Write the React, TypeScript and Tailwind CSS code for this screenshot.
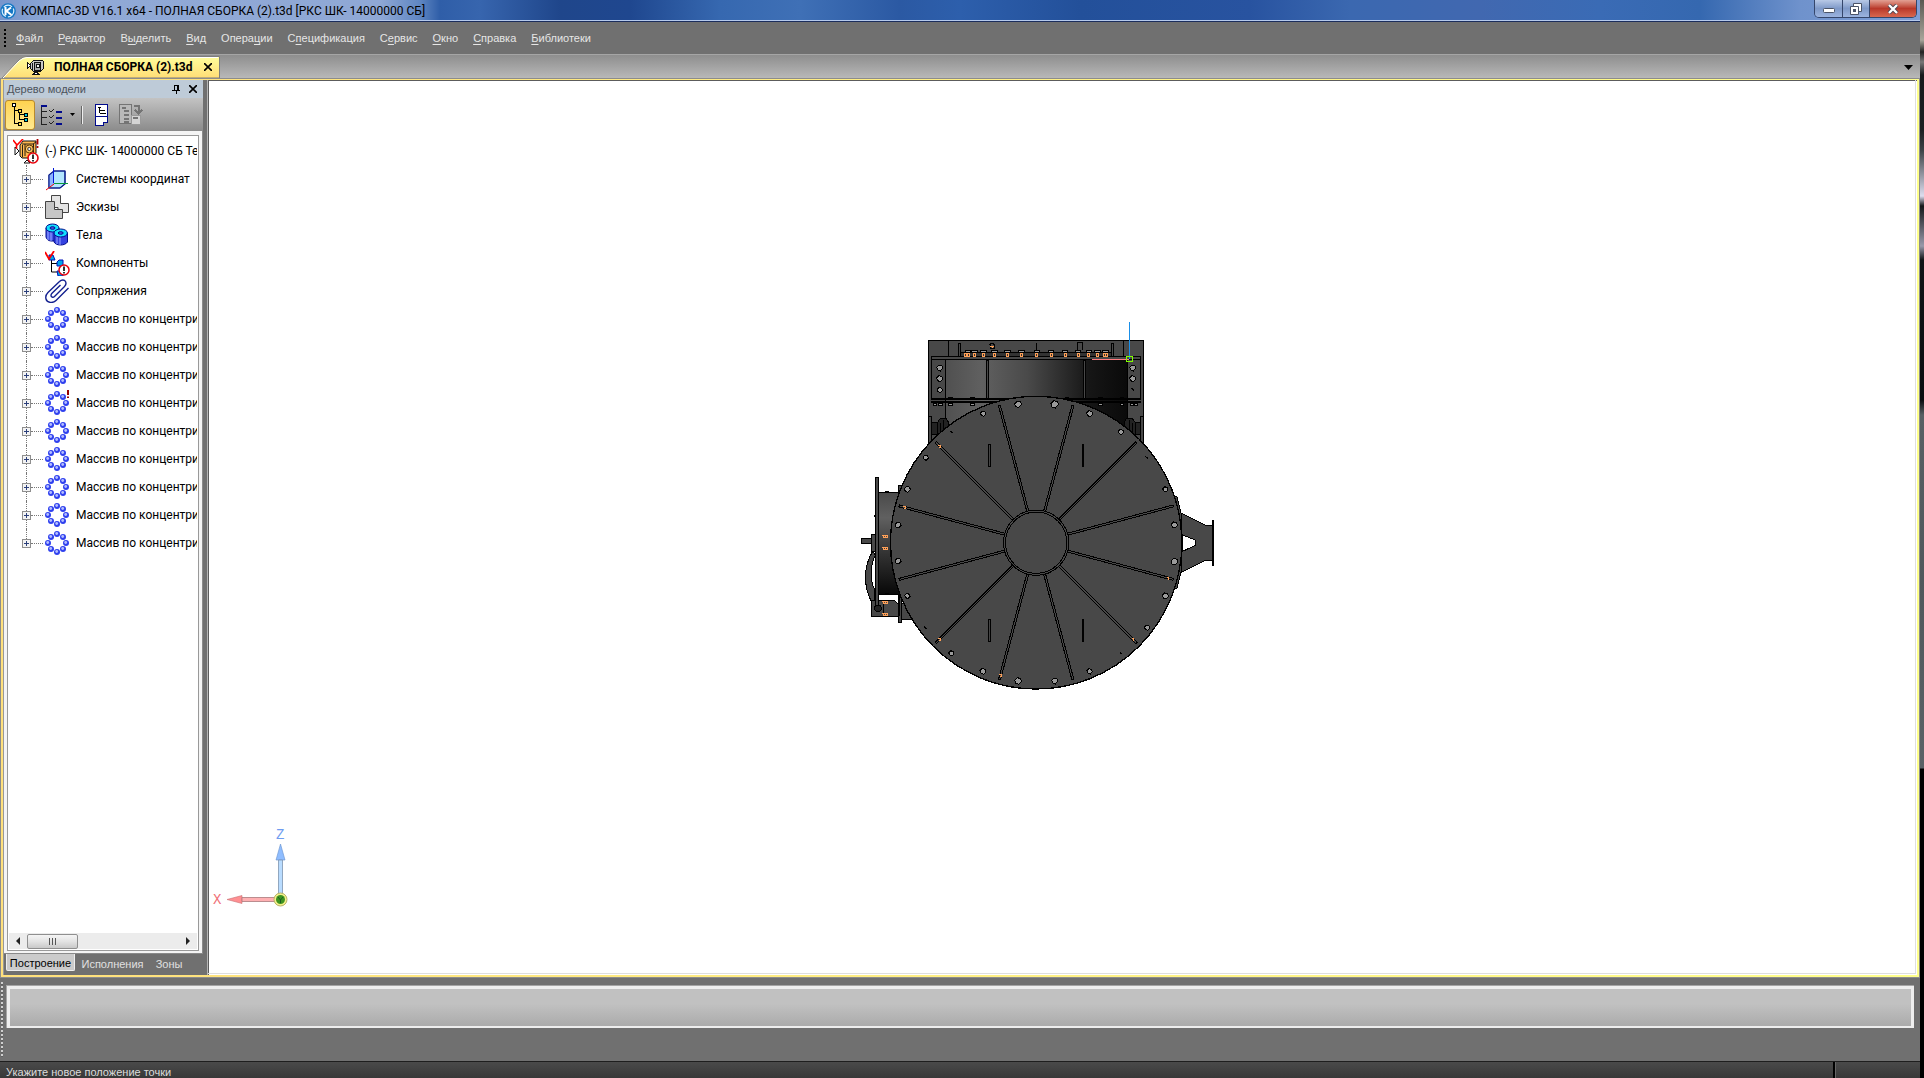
import type { ReactNode } from "react";

const menu = [
  ["", "Ф", "айл"],
  ["", "Р", "едактор"],
  ["В", "ы", "делить"],
  ["", "В", "ид"],
  ["Опера", "ц", "ии"],
  ["С", "п", "ецификация"],
  ["С", "е", "рвис"],
  ["", "О", "кно"],
  ["", "С", "правка"],
  ["", "Б", "иблиотеки"],
];

function AppLogo() {
  return (
    <svg viewBox="0 0 16 16" className="h-4 w-4 shrink-0">
      <circle cx="8" cy="8" r="7.8" fill="#1577c4" />
      <circle cx="8" cy="8" r="5.8" fill="none" stroke="#d9efff" strokeWidth="1.2" strokeDasharray="9 2" />
      <path d="M5.5 4v8M11 4.5 6.5 8l5 4" stroke="#fff" strokeWidth="2" fill="none" />
    </svg>
  );
}

function TabIcon() {
  return (
    <svg viewBox="0 0 17 16" className="h-4 w-[17px] shrink-0" shapeRendering="crispEdges">
      <path d="M.5 3.500v6l3-3zM6 15.500h6l-3-3z" fill="#fff" stroke="#111" />
      <path d="M3.500 4.500 6.500 1.500h9l1 1v7l-3 3h-7l-3-3z" fill="#c8c8c8" stroke="#111" />
      <path d="M5.500 4v7M7.500 3v8h6V3z" fill="#aaa" stroke="#111" />
      <path d="M9.500 5.500h3v3h-3z" fill="#eee" stroke="#111" />
    </svg>
  );
}

function AssemblyIcon() {
  return (
    <svg viewBox="0 0 26 25" className="h-[25px] w-[26px] shrink-0">
      <path d="M2 8v8l4-4zM11 24h6l-3-3z" fill="#fff" stroke="#111" />
      <path d="M7 6 10 2h13v12l-4 5H9l-2-2z" fill="#ffb84d" stroke="#111" />
      <path d="M9.500 6v12M12 5v12M9 5h11l3-2M20.500 5v12" fill="none" stroke="#111" strokeWidth=".9" />
      <circle cx="16.300" cy="10" r="4" fill="#ffc766" stroke="#5a3500" />
      <circle cx="16.300" cy="10" r="1.600" fill="#eee" stroke="#111" strokeWidth=".8" />
      <path d="M0 1l4 5L10 0M3.500 6v4" stroke="#f00" strokeWidth="1.6" fill="none" />
      <path d="M24.500 0v5.500M24.500 7v2" stroke="#a00" strokeWidth="1.800" />
      <circle cx="20" cy="19" r="5" fill="#fff" stroke="#e8000b" strokeWidth="1.600" />
      <path d="M20 15.500v4.500M20 21v1.500" stroke="#000" strokeWidth="1.600" />
    </svg>
  );
}

function AxesIcon() {
  return (
    <svg viewBox="0 0 24 24" className="h-6 w-6">
      <path d="M4 8 9 4h11v13l-5 4H4z" fill="#b3e6ff" stroke="#0a1e8c" />
      <path d="M4 8 9 4v13l-5 4z" fill="#8db6ff" />
      <path d="M4 8 9 4h11v13l-5 4H4z" fill="none" stroke="#0a1e8c" strokeWidth="1.2" />
      <path d="M8.500 1v15" stroke="#0018d8" />
      <path d="M9 16.500h14" stroke="#079a3c" />
      <path d="m9 17-8 6" stroke="#f00000" />
    </svg>
  );
}

function SketchIcon() {
  return (
    <svg viewBox="0 0 24 24" className="h-6 w-6">
      <path d="M6.500.5h9v8h8v9H13v-5H6.500z" fill="#e4e4e4" stroke="#444" />
      <path d="M.5 6.500h9v8H17.500v9H.5z" fill="#c6c6c6" stroke="#444" />
    </svg>
  );
}

function BodiesIcon() {
  return (
    <svg viewBox="0 0 24 24" className="h-6 w-6">
      <path d="M1 5v9c1 5 8 5 13 2V5z" fill="#4756e8" stroke="#000a8c" />
      <path d="M3 8v9M6 9v9" stroke="#9aa6ff" />
      <ellipse cx="7.500" cy="5" rx="6.500" ry="4" fill="#12dfff" stroke="#000a8c" />
      <ellipse cx="7.500" cy="5" rx="2.500" ry="1.300" fill="#4756e8" stroke="#000a8c" />
      <path d="M9 10v9c2 4 11 4 13.500 0v-9z" fill="#3442e0" stroke="#000a8c" />
      <path d="M12 12v9M15 13v9" stroke="#9aa6ff" />
      <ellipse cx="15.700" cy="10" rx="6.700" ry="4" fill="#12dfff" stroke="#000a8c" />
      <ellipse cx="15.700" cy="10" rx="2.500" ry="1.300" fill="#4756e8" stroke="#000a8c" />
    </svg>
  );
}

function ComponentsIcon() {
  return (
    <svg viewBox="0 0 25 25" className="h-[25px] w-[25px] shrink-0">
      <path d="M6.500 9v12H13M6.500 12.500H13" fill="none" stroke="#000" />
      <path d="M4 4h4l2 5H4zM12 11l2-2h4v6h-6zM12 20h6v5h-5z" fill="#00a5e8" stroke="#0010b8" />
      <path d="M0 1l4 7L9 0" stroke="#f00" strokeWidth="1.8" fill="none" />
      <circle cx="19" cy="19" r="5" fill="#fff" stroke="#e8000b" strokeWidth="1.5" />
      <path d="M19 15.500V20M19 21v1.500" stroke="#000" strokeWidth="1.6" />
    </svg>
  );
}

function ClipIcon() {
  return (
    <svg viewBox="0 0 24 24" className="h-6 w-6">
      <path
        d="M23.500 9 11 21.500c-3 3-9 2.500-10-1.500-.8-3 0-4.500 2-6.500L14.500 2.500c2-2 5-2 6 0s.5 3.500-1 5L9.500 17.500c-1.500 1.500-3.500.5-3.500-1 0-1 .3-1.500 1-2.200L15.500 6"
        fill="none"
        stroke="#13208f"
        strokeWidth="1.4"
      />
    </svg>
  );
}

const beads = [
  [12, 3],
  [18, 6],
  [21, 12],
  [18, 18],
  [12, 21],
  [6, 18],
  [3, 12],
  [6, 6],
];

function ArrayIcon({ warn = false }: { warn?: boolean }) {
  return (
    <svg viewBox="0 0 24 24" className="h-6 w-6 overflow-visible">
      {beads.map(([x, y]) => (
        <g key={`${x}-${y}`}>
          <circle cx={x} cy={y} r="3" fill="#2f40ee" />
          <circle cx={x - 0.3} cy={y - 0.5} r="1.4" fill="#b4beff" />
        </g>
      ))}
      {warn && <path d="M23 -1v5M23 5.500v1.500" stroke="#900" strokeWidth="2" />}
    </svg>
  );
}

const tree: { label: string; icon: ReactNode }[] = [
  { label: "Системы координат", icon: <AxesIcon /> },
  { label: "Эскизы", icon: <SketchIcon /> },
  { label: "Тела", icon: <BodiesIcon /> },
  { label: "Компоненты", icon: <ComponentsIcon /> },
  { label: "Сопряжения", icon: <ClipIcon /> },
  ...[0, 1, 2, 3, 4, 5, 6, 7, 8].map((n) => ({
    label: "Массив по концентри",
    icon: <ArrayIcon warn={n === 3} />,
  })),
];

function TitleBar() {
  return (
    <header className="flex h-[22px] items-start justify-between border-b border-[#1b2d5c] bg-[linear-gradient(90deg,#7896cc_0,#90a9d6_60px,#8fa8d5_380px,#5f86c2_420px,#2f5ea8_440px,#3765ae_480px,#1f468b_560px,#1f478f_630px,#3668b0_720px,#3f70b6_800px,#2b59a3_900px,#2d5fac_960px,#23509a_1080px,#2853a0_1250px,#3b68b0_1350px,#4168b0_1480px,#3a6bb5_1600px,#3568b0_1700px,#6f92cc_1800px,#7f9ed6_100%)] shadow-[inset_0_-1px_0_#b5c9ec]">
      <div className="flex h-[22px] items-center gap-[5px]">
        <AppLogo />
        <h1 className="text-[12px] leading-5 text-black">
          КОМПАС-3D V16.1 x64 - ПОЛНАЯ СБОРКА (2).t3d [РКС ШК- 14000000 СБ]
        </h1>
      </div>
      <div className="mr-[3px] flex h-[18px] overflow-hidden rounded-b-[5px] border border-t-0 border-[#35466b]">
        <button aria-label="Свернуть" className="flex w-7 items-center justify-center border-r border-[#35466b] bg-linear-to-b from-[#b8c9e6] via-[#7f99c8] to-[#9cb4df]">
          <svg viewBox="0 0 12 6" className="mt-1 h-[6px] w-3">
            <rect x=".5" y=".5" width="11" height="4" rx="1" fill="#fff" stroke="#4b5468" />
          </svg>
        </button>
        <button aria-label="Восстановить" className="flex w-[27px] items-center justify-center border-r border-[#35466b] bg-linear-to-b from-[#b8c9e6] via-[#7f99c8] to-[#9cb4df]">
          <svg viewBox="0 0 12 12" className="h-3 w-3">
            <path d="M3.500.5h8v8h-8z" fill="#fff" stroke="#4b5468" />
            <path d="M.5 3.500h8v8h-8z" fill="#fff" stroke="#4b5468" />
            <path d="M3 6h3v3H3z" fill="#4b5468" />
          </svg>
        </button>
        <button aria-label="Закрыть" className="flex w-[46px] items-center justify-center bg-linear-to-b from-[#e2a094] via-[#b9382a] to-[#d9674f]">
          <svg viewBox="0 0 12 10" className="h-[10px] w-3">
            <path d="m2 1 8 8M10 1 2 9" stroke="#4b4350" strokeWidth="4" />
            <path d="m2 1 8 8M10 1 2 9" stroke="#fff" strokeWidth="2.4" />
          </svg>
        </button>
      </div>
    </header>
  );
}

function MenuBar() {
  return (
    <nav className="flex h-8 items-center bg-[#707070]">
      <span className="ml-1 h-[18px] border-l-2 border-dotted border-black" />
      <ul className="ml-[10px] flex gap-[15px]">
        {menu.map(([before, key, after]) => (
          <li key={before + key + after}>
            <button className="block font-['Liberation_Sans',sans-serif] text-[11px] leading-4 text-[#e6e6e6]">
              {before}
              <span className="underline underline-offset-2">{key}</span>
              {after}
            </button>
          </li>
        ))}
      </ul>
    </nav>
  );
}

function DocumentTabs() {
  return (
    <div className="flex h-6 items-end justify-between border-t border-[#a5a5a5] bg-linear-to-b from-[#8e8e8e] to-[#b8b8b8]">
      <div className="relative flex h-[22px] w-[220px] items-center">
        <svg viewBox="0 0 220 22" className="absolute inset-0 h-[22px] w-[220px]">
          <defs>
            <linearGradient id="tab" x1="0" y1="0" x2="0" y2="1">
              <stop offset="0" stopColor="#ffff9c" />
              <stop offset="1" stopColor="#ffdd76" />
            </linearGradient>
          </defs>
          <path d="M2 22 19 4q4-3.500 8-3.500h192.500V22z" fill="url(#tab)" stroke="#7d7d7d" />
          <path d="M3 22 19 5q4-3.500 8-3.500h191" fill="none" stroke="#fff" />
        </svg>
        <div className="relative ml-[27px] flex items-center">
          <TabIcon />
          <span className="ml-[10px] w-[138px] text-[12px] leading-5 font-bold whitespace-nowrap text-black">ПОЛНАЯ СБОРКА (2).t3d</span>
          <button aria-label="Закрыть документ" className="ml-3">
            <svg viewBox="0 0 8 8" className="h-2 w-2">
              <path d="m0 0 8 8M8 0 0 8" stroke="#000" strokeWidth="1.6" />
            </svg>
          </button>
        </div>
      </div>
      <button aria-label="Список документов" className="mr-[7px] mb-2">
        <svg viewBox="0 0 9 5" className="h-[5px] w-[9px]">
          <path d="M0 0h9L4.500 5z" />
        </svg>
      </button>
    </div>
  );
}

function PanelToolbar() {
  return (
    <div className="flex h-[33px] items-center bg-linear-to-b from-[#c3c3c3] to-[#8b8b8b] pl-[1px]">
      <button aria-label="Структура" className="flex h-[30px] w-[30px] items-center justify-center rounded-[3px] border border-[#b98a2c] bg-linear-to-b from-[#ffd24f] to-[#ffe98f]">
        <svg viewBox="0 0 16 24" className="h-6 w-4" shapeRendering="crispEdges">
          <path d="M2.500 4v16.500H6M3 7.500h3M7.500 9v7.500H12M8 11.500h4" fill="none" stroke="#000" />
          <path d="M.5.5h3v3h-3z" fill="#fff" stroke="#000" />
          <path d="M6.500 6.500h3v3h-3zM6.500 19.500h3v3h-3z" fill="#ffe04a" stroke="#000" />
          <path d="M12.500 10.500h3v3h-3zM12.500 15.500h3v3h-3z" fill="#00c8e0" stroke="#000" />
        </svg>
      </button>
      <button aria-label="Состав" className="ml-[6px]">
        <svg viewBox="0 0 21 20" className="h-5 w-[21px]" shapeRendering="crispEdges">
          <path d="M.5 0v20M1 6.500h5M1 12.500h5M1 19.500h5" fill="none" stroke="#222" />
          <path d="M0 1h6M15 7h6M15 13h6M15 19h6" stroke="#000a8c" strokeWidth="2" />
          <path d="m8 5 2 2 3-3M8 11l2 2 3-3M8 17l2 2 3-3" fill="none" stroke="#222" />
        </svg>
      </button>
      <button aria-label="Список состава" className="ml-2">
        <svg viewBox="0 0 5 3" className="h-[3px] w-[5px]">
          <path d="M0 0h5L2.500 3z" />
        </svg>
      </button>
      <span className="ml-[6px] h-[18px] w-[2px] border-r border-[#eee] bg-[#666]" />
      <button aria-label="Дополнительное окно" className="ml-3">
        <svg viewBox="0 0 14 22" className="h-[22px] w-[14px]" shapeRendering="crispEdges">
          <path d="M.5.5h12v17.500H8v3H.5z" fill="#fff" stroke="#000a8c" />
          <path d="M0 12.500h13" stroke="#000a8c" />
          <path d="M3 3.500h3M5 6.500h5M5 9.500h6M4.500 4v5" fill="none" stroke="#000" />
        </svg>
      </button>
      <button aria-label="Отношения" disabled className="ml-[10px]">
        <svg viewBox="0 0 24 22" className="h-[22px] w-6" shapeRendering="crispEdges">
          <path d="M.5.5h12v19H.5z" fill="#b9b9b9" stroke="#747474" />
          <path d="M3 4h4M5 7h5M5 11h5M5 15h5M5 18h5" stroke="#747474" strokeWidth="2" />
          <path d="M12.500 11.500h9v9h-9z" fill="#d4d4d4" stroke="#999" />
          <path d="M14 14h5" stroke="#747474" strokeWidth="2" />
          <path d="M15 1.500h4.500V8M16 6l3.500 3.500L23 6" fill="none" stroke="#747474" strokeWidth="2" />
        </svg>
      </button>
    </div>
  );
}

function TreeRow({ label, icon, last }: { label: string; icon: ReactNode; last: boolean }) {
  return (
    <li className="flex h-7 items-center">
      <div className="ml-[13px] flex h-7 w-[9px] shrink-0 flex-col items-center">
        <span className="flex-1 border-l border-dotted border-[#777]" />
        <button aria-label={`Раскрыть: ${label}`} className="h-[9px] w-[9px]">
          <svg viewBox="0 0 9 9" className="block h-[9px] w-[9px]" shapeRendering="crispEdges">
            <rect x=".5" y=".5" width="8" height="8" fill="#f3f3f3" stroke="#8e8e8e" />
            <path d="M2 4.500h5M4.500 2v5" stroke="#2b3f7a" />
          </svg>
        </button>
        <span className={last ? "flex-1" : "flex-1 border-l border-dotted border-[#777]"} />
      </div>
      <span className="w-3 shrink-0 border-t border-dotted border-[#777]" />
      <span className="ml-[2px] flex w-6 shrink-0 justify-center">{icon}</span>
      <span className="ml-[7px] text-[12px] leading-4 whitespace-nowrap text-black">{label}</span>
    </li>
  );
}

function ModelTree() {
  return (
    <aside className="flex w-[199px] shrink-0 flex-col">
      <div className="flex h-[18px] items-center bg-[#becbd8] pr-[6px] pl-[3px]">
        <h2 className="flex-1 font-['Liberation_Sans',sans-serif] text-[11px] leading-4 text-[#4c535c]">Дерево модели</h2>
        <button aria-label="Закрепить">
          <svg viewBox="0 0 8 9" className="h-[9px] w-2" shapeRendering="crispEdges">
            <path d="M2 0h5v5h1v1H5v3H4V6H0V5h2zM3 1v4h2V1z" fillRule="evenodd" />
          </svg>
        </button>
        <button aria-label="Закрыть панель" className="ml-[9px]">
          <svg viewBox="0 0 8 8" className="h-2 w-2">
            <path d="m0 0 8 8M8 0 0 8" stroke="#000" strokeWidth="1.6" />
          </svg>
        </button>
      </div>
      <PanelToolbar />
      <div className="flex min-h-0 flex-1 flex-col border-r border-b border-[#8a8a8a] bg-[#f4f4f4] px-[3px] pt-1 pb-[2px]">
        <div className="flex min-h-0 flex-1 flex-col border border-[#999] bg-white p-px">
          <div className="min-h-0 flex-1 overflow-hidden">
            <div className="flex h-7 items-center pl-1">
              <AssemblyIcon />
              <span className="ml-[6px] text-[12px] leading-4 whitespace-nowrap text-black">(-) РКС ШК- 14000000 СБ Тех</span>
            </div>
            <ul>
              {tree.map((item, i) => (
                <TreeRow key={i} label={item.label} icon={item.icon} last={i === tree.length - 1} />
              ))}
            </ul>
          </div>
          <div className="flex h-4 items-center bg-[#ececec]">
            <button aria-label="Прокрутить влево" className="flex w-[18px] justify-center">
              <svg viewBox="0 0 4 8" className="h-2 w-1">
                <path d="M4 0v8L0 4z" fill="#222" />
              </svg>
            </button>
            <button aria-label="Полоса прокрутки" className="flex h-[15px] w-[51px] items-center justify-center gap-[2px] rounded-[2px] border border-[#8f8f8f] bg-linear-to-b from-[#f5f5f5] via-[#e3e3e3] to-[#c9c9c9]">
              <span className="h-[7px] w-px bg-[#555]" />
              <span className="h-[7px] w-px bg-[#555]" />
              <span className="h-[7px] w-px bg-[#555]" />
            </button>
            <button aria-label="Прокрутить вправо" className="ml-auto flex w-[18px] justify-center">
              <svg viewBox="0 0 4 8" className="h-2 w-1">
                <path d="M0 0v8l4-4z" fill="#222" />
              </svg>
            </button>
          </div>
        </div>
      </div>
      <div className="flex h-[21px] items-start bg-[#707070] pl-[2px] font-['Liberation_Sans',sans-serif] text-[11px] leading-5 text-[#e0e0e0]">
        <button className="h-[17px] w-[69px] rounded-b-[2px] border border-t-0 border-[#eee] bg-[#cbcbcb] leading-[18px] text-black">Построение</button>
        <button className="w-[75px]">Исполнения</button>
        <button className="w-[38px]">Зоны</button>
      </div>
    </aside>
  );
}

// ribs leave the hub every 30 degrees, half a step off the vertical
const ribs = [15, 45, 75, 105, 135, 165, 195, 225, 255, 285, 315, 345];

const bolts = [
  [504, 283, 10],
  [614, 283, 11],
  [399, 311, 8],
  [719, 311, 9],
  [813, 366, 8],
  [304, 367, 3],
  [227, 443, 8],
  [891, 443, 2],
  [172, 538, 9],
  [946, 538, 8],
  [144, 645, 9],
  [973, 645, 9],
  [144, 753, 9],
  [973, 755, 10],
  [172, 858, 8],
  [946, 858, 9],
  [226, 953, 3],
  [891, 953, 8],
  [304, 1030, 8],
  [813, 1030, 2],
  [399, 1084, 9],
  [719, 1084, 8],
  [504, 1113, 10],
  [614, 1113, 9],
  [269, 174, 9],
  [269, 206, 9],
  [269, 240, 8],
  [848, 174, 9],
  [848, 206, 9],
  [848, 239, 3],
];

const topStuds = [347, 354, 373, 400, 433, 472, 514, 560, 603, 645, 684, 716, 742, 762, 769];
const ribStuds = [
  [269, 409],
  [163, 593],
  [954, 805],
  [849, 988],
  [269, 988],
  [452, 1096],
];
const flangeStuds = [
  [106, 679],
  [106, 716],
  [106, 877],
  [106, 913],
];

function Boiler() {
  return (
    <svg viewBox="0 0 1140 1170" className="absolute top-[229px] left-[641px] h-[390px] w-[380px]" shapeRendering="crispEdges">
      <defs>
        <linearGradient id="drum">
          <stop offset="0" stopColor="#505050" />
          <stop offset=".2" stopColor="#606060" />
          <stop offset=".45" stopColor="#4a4a4a" />
          <stop offset=".8" stopColor="#151515" />
          <stop offset="1" stopColor="#0a0a0a" />
        </linearGradient>
        <linearGradient id="nozzle" x1="0" y1="0" x2="0" y2="1">
          <stop offset="0" stopColor="#4a4a4a" />
          <stop offset=".25" stopColor="#606060" />
          <stop offset=".6" stopColor="#333" />
          <stop offset="1" stopColor="#080808" />
        </linearGradient>
      </defs>
      <g fill="#484848" stroke="#000" strokeWidth="3">
        <path d="M236 92h644v320H236z" />
        <path d="M295 92v48M820 92v48M326 138v-38h6v38M785 138v-38h6v38M558 100v28M683 120V98h14v22" />
        <path d="M330 126h455v14H330z" fill="#333" />
        <path d="M286 150h546v200H286z" fill="url(#drum)" stroke="none" />
        <path d="M286 148v190M832 148v190" />
        <path d="M409 150h7v115h-7zM701 150h6v115h-6z" />
        <path d="M245 140h627v9H245z" />
        <path d="M245 149v116M872 149v116" fill="none" />
        <path d="M245 265h627v4H245zM245 273h627v5H245z" />
        <path d="M236 320h9v76h-9zM871 320h9v76h-9z" />
        <path d="M245 338h20v34h-20zM852 338h19v34h-19z" fill="#222" />
        <path d="M262 372v-34l10-14h16l8 14v10l-20 24zM856 372v-34l-10-14h-16l-8 14v10l20 24z" fill="#222" />
        <path d="M272 340v26M280 330v30M846 340v26M838 330v30" />
      </g>
      <g fill="#999" stroke="#000" strokeWidth="3">
        {[254, 270, 300, 367, 750, 815, 845, 857].map((x) => (
          <rect key={x} x={x - 5} y="279" width="11" height="7" />
        ))}
        {[300, 367, 650, 750, 815].map((x) => (
          <rect key={x} x={x - 5} y="262" width="11" height="3" />
        ))}
        {[354, 373, 400, 433, 472, 514, 560, 603, 645, 684, 716, 742, 766].map((x) => (
          <rect key={x} x={x - 8} y="122" width="16" height="5" />
        ))}
        <path d="M420 114v-10l3-4h6l4 4v10z" fill="#484848" />
      </g>
      <g fill="none" stroke="#ffa057" strokeWidth="3">
        {topStuds.map((x) => (
          <rect key={x} x={x - 3} y="130" width="6" height="9" />
        ))}
        <path d="M421 109h11M427 109v6" />
      </g>

      <g fill="#484848" stroke="#000" strokeWidth="3">
        <path d="M86 547h70v305H86z" fill="url(#nozzle)" />
        <path d="M106 545h10M106 852h10" strokeWidth="5" />
        <path d="M35 686h32v13H35z" />
        <path d="M65 674h11v50H65z" />
        <path d="M68 724c-28 45-28 105-4 150h10V840c-14-30-14-75 2-105z" />
        <path d="M63 870h68l12 10h8v38H63z" />
        <path d="M148 918v-66M145 526h9v60h-9zM145 852h8v84h-8zM153 880h50v48h-50z" />
        <path d="M77 503h9v395h-9z" />
        <circle cx="84" cy="895" r="10" fill="#222" />
        <path d="M100 870v48M73 616v6" />
      </g>

      <path d="M992 608 1066 645h24v106h-24l-74 37z" fill="#484848" stroke="#000" strokeWidth="3" />
      <path d="M998 675 1036 690v16l-38 18z" fill="#fff" stroke="#000" strokeWidth="3" />
      <path d="M1089 630v138" stroke="#000" strokeWidth="5" />
      <path d="M974 560h7l12 50v175l-12 50h-7z" fill="#484848" stroke="#000" strokeWidth="3" />

      <ellipse cx="558.5" cy="698" rx="437" ry="439" fill="#484848" stroke="#000" strokeWidth="4" />
      {ribs.map((angle) => (
        <g key={angle} transform={`rotate(${angle} 558.5 698)`}>
          <path d="M558.500 271v330" stroke="#000" strokeWidth="9" />
          <path d="M558.500 274v325" stroke="#484848" strokeWidth="3" />
        </g>
      ))}
      <circle cx="558.5" cy="698" r="95" fill="#484848" stroke="#000" strokeWidth="9" />
      <circle cx="558.5" cy="698" r="95" fill="none" stroke="#484848" strokeWidth="3" />
      <g fill="#444" stroke="#000" strokeWidth="3">
        <path d="M415 403h7v66h-7zM415 928h7v66h-7z" />
        <path d="M697 403h3v66h-3zM697 928h3v66h-3z" />
      </g>
      {bolts.map(([x, y, r]) => (
        <path
          key={`${x}-${y}`}
          d={`M${x - r} ${y - 2}L${x - 2} ${y - r}L${x + r - 2} ${y - r + 3}L${x + r} ${y + 1}L${x + 2} ${y + r}L${x - r + 3} ${y + r - 3}Z`}
          fill="#9a9a9a"
          stroke="#000"
          strokeWidth="3"
        />
      ))}
      <g fill="none" stroke="#ffa057" strokeWidth="3">
        {ribStuds.map(([x, y]) => (
          <path key={`${x}-${y}`} d={`M${x - 4} ${y - 3}h6v6h-3`} />
        ))}
        {flangeStuds.map(([x, y]) => (
          <path key={`${x}-${y}`} d={`M${x - 9} ${y - 3}h18M${x - 5} ${y - 3}v6h10v-6M${x} ${y - 3}v6`} />
        ))}
      </g>

      <path d="M726 148h112" stroke="#ff7c80" strokeWidth="3" />
      <path d="M838 36v111" stroke="#1a8fe8" strokeWidth="3" />
      <path d="M830 139h17v15h-17z" fill="none" stroke="#80ff00" strokeWidth="3" />
    </svg>
  );
}

function AxisTriad() {
  return (
    <div className="absolute bottom-[61px] left-1 flex w-20 flex-col font-['Liberation_Mono',monospace] text-[14px] leading-4">
      <span className="ml-[63px] text-[#6f9cf0]">Z</span>
      <div className="flex items-end">
        <span className="mb-[6px] w-3 text-[#f07078]">X</span>
        <svg viewBox="0 1 64 71" className="h-[71px] w-16">
          <path d="M2 57.500 17 53.500v8z" fill="#ff8f92" stroke="#c97074" strokeWidth=".6" />
          <path d="M17 55.500h35v4H17z" fill="#ffb0b2" stroke="#a97a7c" strokeWidth=".8" />
          <path d="M55.500 2 60 18h-9z" fill="#8fbdff" stroke="#6790cc" strokeWidth=".6" />
          <path d="M53.500 18h4v34h-4z" fill="#b9dcff" stroke="#7d94b0" strokeWidth=".8" />
          <circle cx="55.500" cy="57.500" r="6.500" fill="#f4f08a" stroke="#b9b568" />
          <circle cx="55.500" cy="57.500" r="4.500" fill="#3d9420" />
          <path d="M53 55l2.500 3 2.500-3M55.500 58v3" fill="none" stroke="#1e5c25" />
        </svg>
      </div>
    </div>
  );
}

function Viewport() {
  return (
    <main className="relative min-w-0 flex-1 border-t border-l border-[#5c5c5c] bg-white">
      <Boiler />
      <AxisTriad />
      <div className="absolute right-[1px] bottom-[1px] h-full w-full border-r border-b border-[#dedede]" />
    </main>
  );
}

function PropertyPanel() {
  return (
    <section className="flex h-[83px] items-start bg-[#707070] pt-1">
      <span className="ml-[1px] h-[75px] w-[2px] bg-[repeating-linear-gradient(180deg,#cfcfcf_0,#cfcfcf_2px,#5a5a5a_2px,#707070_4px)]" />
      <div className="mt-[3px] mr-[6px] ml-[3px] h-[43px] flex-1 border-t border-l border-[#a5a5a5] bg-[#eee] p-[3px] pb-[2px]">
        <div className="h-full bg-linear-to-b from-[#c1c1c1] from-40% to-[#ababab]" />
      </div>
    </section>
  );
}

export default function App() {
  return (
    <div className="flex h-screen overflow-hidden bg-black font-['Roboto','Noto_Sans',sans-serif]">
      <div className="flex min-w-0 flex-1 flex-col">
        <TitleBar />
        <MenuBar />
        <DocumentTabs />
        <div className="flex min-h-0 flex-1 border border-[#8c8c8c] bg-[linear-gradient(90deg,#ffe07c,#ffff8c)] p-[2px] pt-px">
          <div className="flex min-w-0 flex-1 border-l border-[#999] bg-[#707070]">
            <ModelTree />
            <div className="w-[5px] border-r border-[#b5b5b5]" />
            <Viewport />
          </div>
        </div>
        <PropertyPanel />
        <footer className="flex h-[17px] items-start border-t border-[#1e1e1e] bg-linear-to-b from-[#4a4a4a] to-[#383838] pl-[6px]">
          <p className="flex-1 font-['Liberation_Sans',sans-serif] text-[11px] leading-5 text-[#dcdcdc]">Укажите новое положение точки</p>
          <span className="h-4 w-[87px] border-l-2 border-black shadow-[inset_1px_0_0_#666]" />
        </footer>
      </div>
      <div className="h-full w-1 shrink-0 bg-[linear-gradient(180deg,#5a5852_0,#a8a59a_40px,#232323_52px,#777_62px,#161a1c_75px,#1c2022_130px,#3c4246_150px,#dde_196px,#15181a_206px,#99a_246px,#101416_260px,#0a0e10_400px,#586064_415px,#50585c_580px,#5a6266_768px,#000_769px)]" />
    </div>
  );
}
